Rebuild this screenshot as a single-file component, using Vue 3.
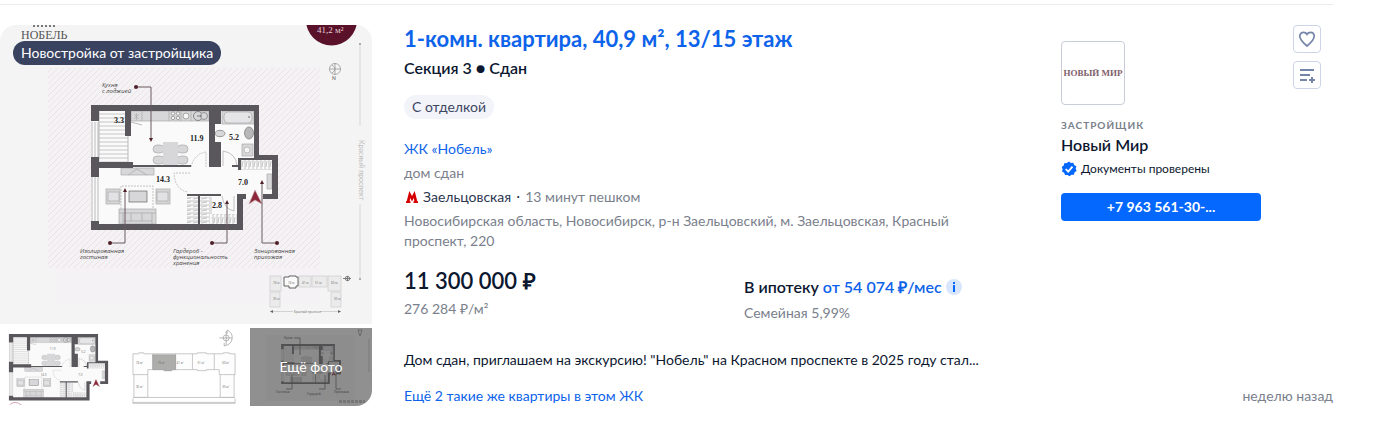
<script setup>
const calloutPins = [
  { d: 'M136 87H151V140', cx: 136, cy: 87, ax: 151, ay: 142, up: false },
  { d: 'M110 243H125V191', cx: 110, cy: 243, ax: 125, ay: 188, up: true },
  { d: 'M212 243H227V203', cx: 212, cy: 243, ax: 227, ay: 200, up: true },
  { d: 'M277 243H262V183', cx: 277, cy: 243, ax: 262, ay: 180, up: true },
]

const arrow = (p) =>
  p.up
    ? `M${p.ax} ${p.ay}l2 4h-4z`
    : `M${p.ax} ${p.ay}l2 -4h-4z`

const callouts = [
  { x: 102, y: 87, lines: ['Кухня', 'с лоджией'] },
  { x: 80, y: 253, lines: ['Изолированная', 'гостиная'] },
  { x: 173, y: 253, lines: ['Гардероб -', 'функциональность', 'хранения'] },
  { x: 254, y: 253, lines: ['Зонированная', 'прихожая'] },
]

const rooms = [
  { x: 114, y: 123, area: '3.3' },
  { x: 190, y: 141, area: '11.9' },
  { x: 229, y: 140, area: '5.2' },
  { x: 156, y: 182, area: '14.3' },
  { x: 238, y: 185, area: '7.0' },
  { x: 212, y: 208, area: '2.8' },
]

const sections = [
  { x: 270, y: 276, w: 11, h: 15, t: '74 м' },
  { x: 299, y: 276, w: 12, h: 11, t: '41 м' },
  { x: 312, y: 276, w: 15, h: 11, t: '51 м' },
  { x: 328, y: 276, w: 13, h: 15, t: '60 м' },
  { x: 270, y: 292, w: 10, h: 15, t: '35 м' },
  { x: 331, y: 292, w: 10, h: 15, t: '35 м' },
]

const blocks = [
  { x: 141, y: 362, t: '74 м²' },
  { x: 163, y: 362, t: '75 м²' },
  { x: 182, y: 362, t: '41 м²' },
  { x: 203, y: 362, t: '51 м²' },
  { x: 228, y: 362, t: '60 м²' },
  { x: 141, y: 387, t: '35 м²' },
  { x: 228, y: 387, t: '35 м²' },
]
</script>

<template>
  <article class="card">
    <section class="gallery" aria-label="Фотографии квартиры">
      <div class="photo">
        <svg viewBox="0 25 372 299" role="img" aria-label="План квартиры">
          <defs>
            <pattern id="hatch" width="6" height="6" patternUnits="userSpaceOnUse">
              <path d="M-2 8L8 -2M-2 2L2 -2M4 8L8 4" stroke="#eae4e5" stroke-width="1" />
            </pattern>
            <pattern id="hangers" width="4" height="8" patternUnits="userSpaceOnUse">
              <path d="M1 0V8M3 1L2 7" stroke="#aaa" stroke-width=".7" />
            </pattern>
            <pattern id="shelves" width="8" height="4" patternUnits="userSpaceOnUse">
              <path d="M0 1H8M1 3L7 2" stroke="#aaa" stroke-width=".7" />
            </pattern>
            <g id="flat">
              <path d="M91 105H259V155H278V199H243V230H91Z" fill="#fbfafb" />
              <path
                d="M99 114H125M99 118H125M99 122H125M99 126H125M99 130H125M99 134H125M99 138H128M99 142H128M99 146H128M99 150H128M99 154H128M99 158H128M99 162H128"
                stroke="#c6c5c7"
                stroke-width="1"
              />
              <g stroke="#aaa" stroke-width=".8" fill="none">
                <path d="M92 122V157M95 122V157M98 122V157M92 177V221M95 177V221M98 177V221M99 111V161M128 136V162" />
                <path d="M131 122L142 125" />
              </g>
              <g stroke="#aaa" stroke-width=".7" fill="#d7d6d8">
                <path d="M131 111H209V121H131Z" />
                <path d="M142 111V121M169 111V121M181 111V121M191 111V121" />
                <path d="M134 114L139 119M139 114L134 119M136.500 113V120" />
                <g fill="#f5f5f5" stroke="#888">
                  <circle cx="173" cy="113.500" r="1.700" />
                  <circle cx="178" cy="113.500" r="1.700" />
                  <circle cx="173" cy="118" r="1.700" />
                  <circle cx="178" cy="118" r="1.700" />
                  <circle cx="186" cy="116" r="3" />
                </g>
                <circle cx="198" cy="116" r="4.500" stroke="#666" />
                <circle cx="204" cy="116" r="3.500" stroke="#777" />
                <path d="M197 116H202" stroke="#555" />
                <rect x="222" y="111" width="32" height="13" />
                <rect x="224" y="112" width="28" height="11" rx="4" fill="#e5e4e6" />
                <circle cx="249" cy="117" r=".8" fill="#555" />
                <ellipse cx="220" cy="133.500" rx="5" ry="3.200" stroke="#777" />
                <ellipse cx="249" cy="133" rx="4.500" ry="6" fill="#b7b6b9" stroke="#777" />
                <rect x="242" y="144" width="11" height="12" />
                <circle cx="247" cy="150" r="3" fill="#f5f5f5" />
                <rect x="153" y="145" width="11" height="8" rx="4" />
                <rect x="153" y="156" width="11" height="8" rx="4" />
                <rect x="177" y="145" width="11" height="8" rx="4" />
                <rect x="177" y="156" width="11" height="8" rx="4" />
                <rect x="163" y="142" width="15" height="23" stroke="none" />
                <rect x="121" y="168" width="33" height="7" />
                <path d="M128 175L137 169L147 175" fill="none" />
                <rect x="106" y="189" width="14" height="15" />
                <rect x="108" y="192" width="11" height="9" fill="#e2e1e3" />
                <rect x="156" y="189" width="14" height="15" />
                <rect x="157" y="192" width="11" height="9" fill="#e2e1e3" />
                <rect x="129" y="191" width="18" height="11" stroke="#666" />
                <rect x="119" y="209" width="37" height="15" />
                <path d="M123 213V224M131 213V221M142 213V221M152 213V224M119 213H156M123 221H152" />
                <path d="M267 174H272V189H267Z" />
              </g>
              <path d="M241 160H272V170H241ZM211 214H237V224H211Z" fill="url(#hangers)" />
              <path d="M187 197H198V224H187ZM200 197H210V224H200Z" fill="url(#shelves)" />
              <g fill="none" stroke="#aaa" stroke-width=".7">
                <path d="M121 209V186H153V209M191 167Q194 154 206 152V167M190 173H174Q175 190 188 192" stroke-dasharray="2 1" />
                <path d="M223 166V151Q236 153 237 166M234 196V211Q224 209 222 196M211 197V214" />
              </g>
              <path
                d="M91 105H259V155H278V199H263V194H272V160H259V160H241V170H238V167H232V165H238V158H254V111H221V124H215V142H221V167H209V111H131V136H125V111H99V121H91ZM91 157H99V162H133V165H191V167H133V168H99V177H91ZM91 221H99V224H198V196H187V194H221V196H200V224H237V194H246V199H243V230H91Z"
                fill="#59575c"
              />
              <path d="M212 126H214V141H212Z" fill="#59575c" />
              <path d="M255 190L249 204L255 200L262 204Z" fill="#8b2739" stroke="#c4a2a9" stroke-width=".6" />
            </g>
          </defs>
          <rect y="25" width="372" height="299" fill="#f4f4f4" />
          <path d="M48 66H320V304H55V268H48Z" fill="#f4f2f4" />
          <rect x="48" y="68" width="272" height="200" fill="url(#hatch)" />
          <path d="M34 25v2M38 25v2M42 25v2M46 25v2M50 25v2M54 25v2" stroke="#777" stroke-width="2" />
          <text x="21" y="39" class="brand">НОБЕЛЬ</text>
          <circle cx="331.500" cy="20" r="25.500" fill="#59122a" />
          <text x="317" y="33" class="size">41,2 м²</text>
          <g fill="none" stroke="#999" stroke-width=".8">
            <circle cx="335" cy="69" r="5.500" />
            <path d="M335 63V75M329 69H341M332 65Q338 69 332 73" />
            <path d="M360 44V126M360 204V278" stroke="#d2d2d2" />
          </g>
          <circle cx="360" cy="44" r="1" fill="#999" />
          <circle cx="360" cy="279" r="1" fill="#999" />
          <text x="332" y="80" class="north">N</text>
          <text x="359" y="140" class="street" transform="rotate(90 359 140)">Красный проспект</text>

          <use href="#flat" />

          <g v-for="p in calloutPins" :key="p.d">
            <path :d="p.d" fill="none" stroke="#6b5b60" stroke-width="1" />
            <circle :cx="p.cx" :cy="p.cy" r="2" fill="#4f2029" />
            <path :d="arrow(p)" fill="#4f2029" />
          </g>
          <text v-for="c in callouts" :key="c.y + c.lines[0]" class="callout">
            <tspan v-for="(l, i) in c.lines" :key="l" :x="c.x" :y="c.y + i * 6">{{ l }}</tspan>
          </text>
          <text v-for="r in rooms" :key="r.area" :x="r.x" :y="r.y" class="room">{{ r.area }}</text>

          <g v-for="s in sections" :key="s.x + '-' + s.y">
            <rect :x="s.x" :y="s.y" :width="s.w" :height="s.h" fill="#ebebeb" stroke="#ccc" stroke-width=".7" />
            <text :x="s.x + 3" :y="s.y + 8" class="tiny">{{ s.t }}</text>
          </g>
          <path d="M284 277H289V276H296V277H298V286H296V288H289V286H284Z" fill="#fafafa" stroke="#555" stroke-width=".9" />
          <text x="288" y="284" class="tiny">74 м</text>
          <path d="M270 311.500H341" stroke="#bbb" stroke-width=".6" />
          <path d="M270 311.500l3 -1.500v3zM341 311.500l-3 -1.500v3z" fill="#666" />
          <rect x="293" y="309" width="27" height="5" fill="#f4f4f4" />
          <text x="294" y="313" class="tiny">Красный проспект</text>
          <circle cx="347.500" cy="278.500" r="2.200" fill="none" stroke="#666" stroke-width=".8" />
          <path d="M343 278.500H351M347.500 276V281" stroke="#666" stroke-width=".8" />
        </svg>
        <span class="label">Новостройка от застройщика</span>
      </div>
      <div class="thumbs">
        <div class="thumb">
          <svg viewBox="0 328 122 78" role="img" aria-label="План без подписей">
            <rect y="328" width="122" height="78" fill="#fff" />
            <use href="#flat" transform="translate(-39.700 278) scale(.535)" />
            <text x="50" y="350" class="tiny">11.9</text>
            <text x="82" y="353" class="tiny">5.2</text>
            <text x="41" y="376" class="tiny">14.3</text>
            <text x="79" y="376" class="tiny">7.0</text>
            <path d="M9 406Q15 400 22 406" fill="none" stroke="#c9919d" stroke-width=".8" />
          </svg>
        </div>
        <div class="thumb">
          <svg viewBox="125 328 122 78" role="img" aria-label="План этажа">
            <rect x="125" y="328" width="122" height="78" fill="#fff" />
            <g fill="#fdfdfd" stroke="#bbb" stroke-width=".8">
              <path
                d="M133 354H139V353H144V354H198V353H207V354H224V353H230V354H236V375H235V398H221V375H220V370H207V371H198V370H172V371H164V370H148V398H134V375H133Z"
              />
              <path d="M153 354V370M176 354V370M193 354V370M215 354V370M134 375H148M221 375H236M133 399V404H236V399M133 398H236M133 403H236" fill="none" />
            </g>
            <path d="M153 355H176V370H172V371H165V370H153Z" fill="#adaeac" stroke="#999" stroke-width=".6" />
            <text v-for="b in blocks" :key="b.x + '-' + b.y" :x="b.x - 5" :y="b.y + 2" class="tiny">{{ b.t }}</text>
            <g fill="none" stroke="#999" stroke-width=".7">
              <path d="M228 330Q234 333 233 339Q232 345 225 346M228 330V334M225 346V343M220 338H233" />
              <circle cx="227" cy="338" r="3" />
              <path d="M227 331V345" />
            </g>
          </svg>
        </div>
        <button class="thumb more" type="button">
          <svg viewBox="250 328 122 78" aria-hidden="true">
            <rect x="250" y="328" width="122" height="78" fill="#f0f0f0" />
            <rect x="266" y="335" width="88" height="66" fill="#ebebeb" />
            <use href="#flat" transform="translate(252 310.500) scale(.32)" />
            <path d="M281 344H335V360H341V374H330V384H281Z" fill="#ccc" fill-opacity=".4" />
            <g fill="none" stroke="#777" stroke-width=".7">
              <path d="M294 338H300V355M286 389H292V374M319 389H325V375M341 389H336V371" />
              <path d="M369 339V372" stroke="#bbb" />
              <path d="M339 401.500H365" stroke-dasharray="3 1" stroke-width="3" stroke="#c4c4c4" />
            </g>
            <text x="284" y="339" class="tiny">Кухня</text>
            <text x="276" y="393" class="tiny">Гостиная</text>
            <text x="307" y="395" class="tiny">Гардероб</text>
            <text x="334" y="393" class="tiny">Прихожая</text>
            <path d="M358 330H362L360 336Z" fill="none" stroke="#999" stroke-width=".7" />
          </svg>
          <span class="veil">Ещё фото</span>
        </button>
      </div>
    </section>

    <div class="body">
      <div class="top">
        <div class="info">
          <h2 class="title"><a href="#">1-комн. квартира, 40,9 м², 13/15 этаж</a></h2>
          <p class="subtitle">Секция 3 ● Сдан</p>
          <span class="tag">С отделкой</span>
          <a class="complex" href="#">ЖК «Нобель»</a>
          <p class="muted">дом сдан</p>
          <p class="metro">
            <svg width="12" height="12" viewBox="0 0 12 12" aria-hidden="true">
              <path d="M3.300 0L6 5L8.700 0L11.300 10.300H12V12H7.500V10.300H8.300L7.800 7L6 10.500L4.200 7L3.700 10.300H4.500V12H0V10.300H.7Z" fill="#d50000" />
            </svg>
            <a href="#">Заельцовская</a><span>⋅</span><span class="walk">13 минут пешком</span>
          </p>
          <p class="muted address">
            Новосибирская область, Новосибирск, р-н Заельцовский, м. Заельцовская, Красный проспект, 220
          </p>
        </div>

        <aside class="developer">
          <div class="logo">НОВЫЙ МИР</div>
          <span class="role">Застройщик</span>
          <strong class="name">Новый Мир</strong>
          <span class="verified">
            <svg width="16" height="16" viewBox="0 0 16 16" aria-hidden="true">
              <path
                d="M8 0.500L9.900 2L12.300 1.700L13.100 4L15.300 5.200L14.700 7.600L15.600 9.900L13.600 11.300L12.900 13.700L10.500 13.700L8.500 15.300L6.500 13.900L4 14.100L3.200 11.800L1 10.600L1.600 8.200L0.700 6L2.700 4.500L3.300 2.200L5.800 2.100Z"
                fill="#0468ff"
              />
              <path d="M4.700 8L7.200 10.700L11.500 5.600" fill="none" stroke="#fff" stroke-width="1.800" />
            </svg>
            Документы проверены
          </span>
          <button class="phone" type="button">+7 963 561-30-...</button>
        </aside>

        <div class="actions">
          <button type="button" aria-label="В избранное">
            <svg width="18" height="18" viewBox="0 0 18 18" aria-hidden="true">
              <path
                d="M9 16C5 12.700 1.800 9.800 1.800 6.300C1.800 3.900 3.500 2.300 5.600 2.300C7 2.300 8.300 3 9 4.300C9.700 3 11 2.300 12.400 2.300C14.500 2.300 16.200 3.900 16.200 6.300C16.200 9.800 13 12.700 9 16Z"
                fill="none"
                stroke="#7585a8"
                stroke-width="1.700"
              />
            </svg>
          </button>
          <button type="button" aria-label="Добавить к сравнению">
            <svg width="18" height="18" viewBox="0 0 18 18" aria-hidden="true">
              <path d="M2 4H16M2 9H12M2 14H9M11 14H17M14 11V17" fill="none" stroke="#7585a8" stroke-width="2" />
            </svg>
          </button>
        </div>
      </div>

      <div class="prices">
        <div>
          <p class="price">11 300 000 ₽</p>
          <p class="muted">276 284 ₽/м²</p>
        </div>
        <div class="loan">
          <p class="mortgage">
            В ипотеку <a href="#">от 54 074 ₽/мес</a>
            <button class="hint" type="button" aria-label="Подробнее об ипотеке">
              <svg width="16" height="16" viewBox="0 0 16 16" aria-hidden="true">
                <path d="M7 3H9V5H7ZM7 6H9V13H7Z" fill="#0468ff" />
              </svg>
            </button>
          </p>
          <p class="muted">Семейная 5,99%</p>
        </div>
      </div>

      <p class="description">Дом сдан, приглашаем на экскурсию! "Нобель" на Красном проспекте в 2025 году стал...</p>
      <footer class="footer">
        <a href="#">Ещё 2 такие же квартиры в этом ЖК</a>
        <span class="muted">неделю назад</span>
      </footer>
    </div>
  </article>
</template>

<style>
body {
  margin: 0;
  background: #fff;
}
</style>

<style scoped>
.card {
  display: flex;
  gap: 32px;
  margin: 4px 42px 0 0;
  padding-top: 20px;
  border-top: 1px solid #ececee;
  font: 14px/20px Lato, "Open Sans", sans-serif;
  color: #0c1730;
}
p,
h2 {
  margin: 0;
}
a {
  color: #0d63ea;
  text-decoration: none;
}
button {
  padding: 0;
  border: 0;
  font: inherit;
  cursor: pointer;
}
svg {
  display: block;
  flex: none;
}
.gallery {
  display: flex;
  flex: none;
  flex-direction: column;
  gap: 4px;
  width: 372px;
  border-radius: 16px;
  overflow: hidden;
}
.photo {
  position: relative;
}
.photo svg,
.thumb svg {
  width: 100%;
}
.label {
  position: absolute;
  top: 16px;
  left: 13px;
  padding: 0 8px;
  border-radius: 12px;
  background: #39435f;
  color: #fff;
  line-height: 24px;
}
.thumbs {
  display: grid;
  grid-template-columns: 1fr 1fr 122px;
  gap: 4px;
}
.more {
  position: relative;
}
.veil {
  position: absolute;
  inset: 0;
  display: flex;
  align-items: center;
  justify-content: center;
  background: rgba(0, 0, 0, 0.4);
  color: #fff;
}
.brand {
  font: 12px "Liberation Serif", serif;
  fill: #555;
}
.size {
  font: 9px "Liberation Serif", serif;
  fill: #e4cdd4;
}
.north {
  font: bold 5px Lato, sans-serif;
  fill: #777;
}
.street {
  font: 7px Lato, sans-serif;
  fill: #bbb;
}
.callout {
  font: italic 6px "Open Sans", sans-serif;
  fill: #444;
}
.room {
  font: bold 8px "Liberation Serif", serif;
  fill: #222;
}
.tiny {
  font: 3px "Open Sans", sans-serif;
  fill: #666;
}
.body {
  flex: 1;
  min-width: 0;
}
.top {
  display: flex;
}
.info {
  display: flex;
  flex: 1;
  flex-direction: column;
  align-items: flex-start;
  max-width: 576px;
  margin-right: auto;
}
.title {
  font-size: 22px;
  font-weight: 700;
  line-height: 28px;
}
.subtitle {
  margin-top: 3px;
  font-size: 16px;
  font-weight: 600;
  line-height: 24px;
}
.tag {
  margin-top: 15px;
  padding: 0 8px;
  border-radius: 12px;
  background: #f3f4fa;
  color: #3d4762;
  line-height: 24px;
}
.complex {
  margin-top: 20px;
}
.muted {
  color: #7a808c;
}
.info .muted,
.metro {
  margin-top: 4px;
}
.metro {
  display: flex;
  align-items: center;
  gap: 5px;
  padding-left: 2px;
}
.metro a {
  color: #2c3650;
}
.walk {
  color: #7a808c;
}
.developer {
  display: flex;
  flex: none;
  flex-direction: column;
  width: 200px;
  margin: 16px 32px 0 0;
}
.logo {
  display: flex;
  align-items: center;
  justify-content: center;
  width: 62px;
  height: 62px;
  border: 1px solid #c9cdda;
  border-radius: 4px;
  color: #80606b;
  font: bold 9px "Liberation Serif", serif;
  white-space: nowrap;
}
.role {
  margin-top: 12px;
  color: #7a808c;
  font-size: 10px;
  font-weight: 700;
  letter-spacing: 1px;
  line-height: 16px;
  text-transform: uppercase;
}
.name {
  font-size: 16px;
  font-weight: 600;
  line-height: 24px;
}
.verified {
  display: flex;
  gap: 4px;
  margin-top: 4px;
  font-size: 12px;
  line-height: 16px;
}
.phone {
  height: 28px;
  margin-top: 16px;
  border-radius: 4px;
  background: #0468ff;
  color: #fff;
  font-weight: 700;
}
.actions {
  display: flex;
  flex: none;
  flex-direction: column;
  gap: 8px;
  margin-right: 12px;
}
.actions button {
  display: flex;
  align-items: center;
  justify-content: center;
  width: 28px;
  height: 28px;
  border: 1px solid #ccd5e8;
  border-radius: 4px;
  background: #fff;
}
.prices {
  display: flex;
  gap: 16px;
  margin-top: 16px;
}
.prices > div {
  width: 324px;
}
.price {
  font-size: 22px;
  font-weight: 600;
  line-height: 28px;
}
.prices .muted {
  margin-top: 4px;
}
.loan {
  padding-top: 8px;
}
.mortgage {
  display: flex;
  align-items: center;
  gap: 4px;
  font-size: 16px;
  font-weight: 600;
  line-height: 24px;
}
.hint {
  border-radius: 50%;
  background: #d8e6fd;
}
.description {
  margin-top: 27px;
}
.footer {
  display: flex;
  justify-content: space-between;
  margin-top: 16px;
}
</style>
